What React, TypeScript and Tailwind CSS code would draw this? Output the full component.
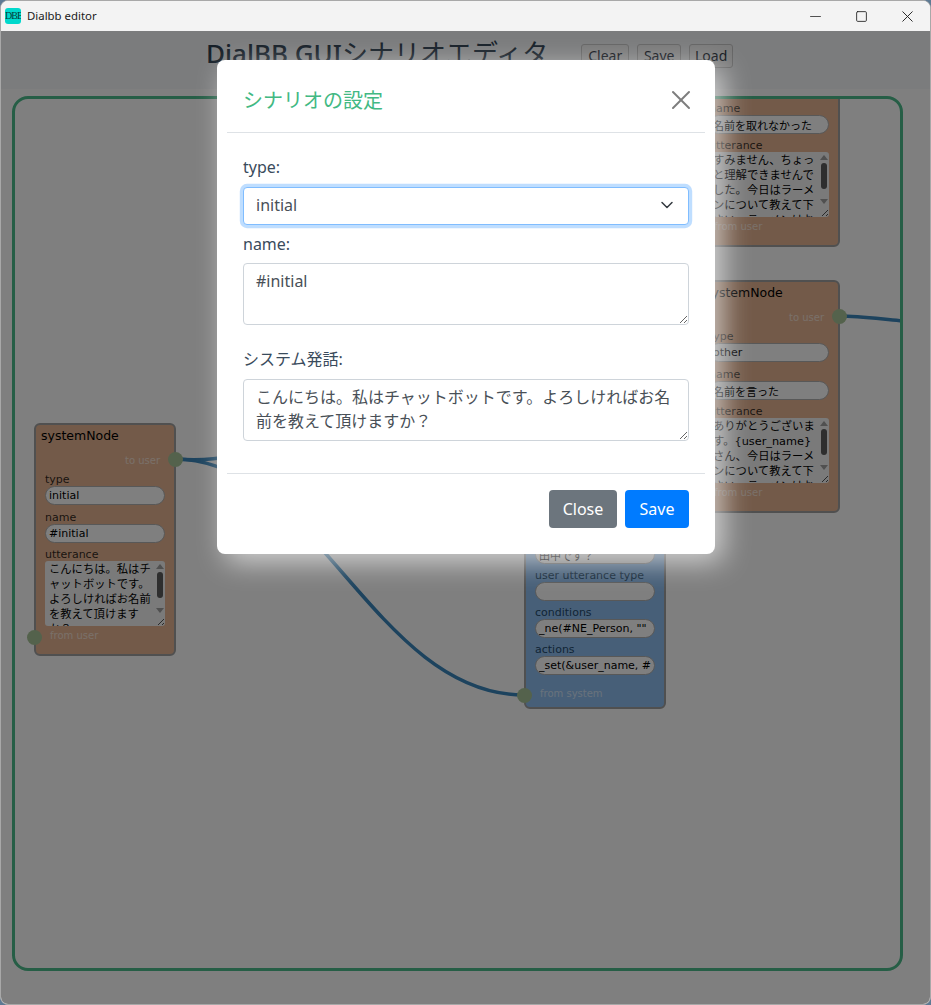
import React from 'react';
import { ChevronDown, Minus, Square, X } from 'lucide-react';

type Field = {
  label: string;
  value: string;
  multiline?: boolean;
};

type NodeProps = {
  left: number;
  top: number;
  fields: Field[];
};

const nodeFont = '[font-family:"DejaVu_Sans","Noto_Sans_CJK_JP",sans-serif]';
const pillInput =
  'block w-full h-[19px] rounded-full border border-[#b0b0b0] bg-white px-[3px] py-0 text-[11px] leading-[16px] text-black outline-none';

function Handle({ className }: { className: string }) {
  return <div className={`absolute w-[15px] h-[15px] rounded-full bg-[#a8c498] ${className}`} />;
}

function FakeScrollbar() {
  return (
    <div className="flex-none w-[11px] h-full flex flex-col items-center pt-[3px]">
      <div className="w-0 h-0 border-l-[4px] border-r-[4px] border-b-[5px] border-l-transparent border-r-transparent border-b-[#a0a0a0]" />
      <div className="w-[6px] h-[26px] mt-[3px] rounded-[3px] bg-[#5c5c5c]" />
      <div className="w-0 h-0 mt-[10px] border-l-[4px] border-r-[4px] border-t-[5px] border-l-transparent border-r-transparent border-t-[#a0a0a0]" />
    </div>
  );
}

function SystemNode({ left, top, fields }: NodeProps) {
  return (
    <div
      className={`absolute w-[142px] h-[233px] rounded-[6px] border-2 border-[#a0a0a0] bg-[#e6b593] px-[9px] ${nodeFont}`}
      style={{ left, top }}
    >
      <div className="-ml-[4px] pt-[2px] text-[12.5px] leading-[18px] text-black">systemNode</div>
      <div className="mt-[9px] pr-[5px] text-right text-[10px] leading-[14px] text-white/60">to user</div>
      <div className="mt-[6px] flex flex-col gap-[7px]">
        {fields.map((field) => (
          <div key={field.label} className={field.multiline ? '-mt-[1px]' : ''}>
            <div className="text-[11px] leading-[12px] text-black/80">{field.label}</div>
            {field.multiline ? (
              <div className="relative flex h-[65px] rounded-[3px] bg-[#f4f4f4] overflow-hidden">
                <div className="flex-1 min-w-0 pl-[4px] pt-[1px] text-[11.3px] leading-[15px] text-black break-all">{field.value}</div>
                <FakeScrollbar />
                <svg className="absolute right-0 bottom-0 w-[8px] h-[8px]" viewBox="0 0 8 8" stroke="#555" strokeWidth="1">
                  <path d="M1 7 L7 1 M5 7 L7 5" />
                </svg>
              </div>
            ) : (
              <input readOnly value={field.value} className={pillInput} />
            )}
          </div>
        ))}
      </div>
      <div className="absolute left-[14px] bottom-[11px] text-[10px] leading-[14px] text-white/60">from user</div>
      <Handle className="-left-[9px] bottom-[9px]" />
      <Handle className="-right-[9px] top-[27px]" />
    </div>
  );
}

function UserNodeBottom() {
  const rows = [
    { label: 'user utterance type', value: '' },
    { label: 'conditions', value: '_ne(#NE_Person, ""' },
    { label: 'actions', value: '_set(&user_name, #' },
  ];
  return (
    <div className={`absolute left-[509px] top-[398px] w-[142px] h-[212px] rounded-[6px] border-2 border-[#a0a0a0] bg-[#8fbff0] px-[9px] ${nodeFont}`}>
      <div className="pt-[46px] flex flex-col gap-[6px]">
        <input readOnly value="田中です？" className={pillInput} />
        {rows.map((row) => (
          <div key={row.label}>
            <div className="text-[11px] leading-[12px] text-[#234a6c]">{row.label}</div>
            <input readOnly value={row.value} className={pillInput} />
          </div>
        ))}
      </div>
      <div className="absolute left-[14px] bottom-[6px] text-[10px] leading-[14px] text-white/60">from system</div>
      <Handle className="-left-[9px] bottom-[4px]" />
    </div>
  );
}

function ScenarioModal() {
  const labelClass = 'block text-[16px] leading-[24px] text-[#3a4b5c]';
  const textareaClass =
    'block w-full h-[62px] rounded-[4px] border border-[#ced4da] bg-white px-[12px] py-[5px] text-[16px] leading-[24px] text-[#495057] outline-none';

  return (
    <div className="absolute left-[216px] top-[60px] w-[498px] h-[494px] rounded-[8px] bg-white px-[10px] shadow-[8px_8px_28px_rgba(255,255,255,0.65)] [font-family:'Noto_Sans','Noto_Sans_CJK_JP',sans-serif]">
      <div className="h-[73px] border-b border-[#dee2e6] pl-[16px] pr-[8px] flex items-center justify-between">
        <h5 className="text-[20px] leading-[30px] pt-[10px] font-normal text-[#42b983]">シナリオの設定</h5>
        <X className="w-[32px] h-[32px] mt-[7px] text-[#7d7d7d]" strokeWidth={1.5} />
      </div>

      <div className="px-[16px] pt-[22px] h-[341px] border-b border-[#dee2e6]">
        <label className={`${labelClass} mb-[8px]`}>type:</label>
        <div className="relative">
          <select
            defaultValue="initial"
            className="block w-full h-[38px] appearance-none rounded-[4px] border border-[#80bdff] bg-white pl-[12px] pr-[12px] pb-[2px] text-[16px] text-[#495057] outline-none shadow-[0_0_0_3.2px_rgba(0,123,255,0.25)]"
          >
            <option value="initial">initial</option>
            <option value="other">other</option>
          </select>
          <ChevronDown className="absolute right-[12px] top-[8px] w-[20px] h-[20px] text-[#343a40]" strokeWidth={1.8} />
        </div>
        <label className={`${labelClass} mt-[7px] mb-[7px]`}>name:</label>
        <textarea readOnly defaultValue="#initial" className={textareaClass} />
        <label className={`${labelClass} mt-[22px] mb-[8px]`}>システム発話:</label>
        <textarea
          readOnly
          defaultValue="こんにちは。私はチャットボットです。よろしければお名前を教えて頂けますか？"
          className={textareaClass}
        />
      </div>

      <div className="px-[16px] pt-[16px] flex justify-end gap-[8px]">
        <button className="h-[38px] w-[68px] rounded-[4px] bg-[#6c757d] text-[16px] text-white">Close</button>
        <button className="h-[38px] w-[64px] rounded-[4px] bg-[#007bff] text-[16px] text-white">Save</button>
      </div>
    </div>
  );
}

export default function App() {
  const headerButton = 'h-[24px] rounded-[3px] border border-[#c8c8c8] bg-[#f4f4f4] text-[14px] leading-[22px] text-[#1e2b38]';

  return (
    <div className="relative w-[931px] h-[1005px] overflow-hidden bg-[#5d7a94] [font-family:'Noto_Sans','Noto_Sans_CJK_JP',sans-serif]">
      <div className="w-full h-full rounded-[8px] overflow-hidden border border-[#a8a8a8] bg-white flex flex-col">
        {/* window chrome */}
        <div className="relative z-20 flex-none h-[30px] bg-[#f3f3f3] flex items-center justify-between">
          <div className="flex items-center pl-[4px] gap-[6px]">
            <div className="w-[16px] h-[16px] rounded-[3px] bg-[#00d8cc] overflow-hidden text-[10px] leading-[16px] text-center text-[#063b3b] [font-family:'Liberation_Serif',serif] tracking-[-0.9px]">
              DBB
            </div>
            <span className="text-[11.4px] leading-[16px] text-[#1a1a1a]">Dialbb editor</span>
          </div>
          <div className="flex items-center">
            <div className="w-[46px] flex justify-center"><Minus className="w-[17px] h-[17px] text-[#222]" strokeWidth={1.1} /></div>
            <div className="w-[46px] flex justify-center"><Square className="w-[13px] h-[13px] text-[#222]" strokeWidth={1.6} /></div>
            <div className="w-[46px] flex justify-center"><X className="w-[19px] h-[19px] text-[#222]" strokeWidth={1.2} /></div>
          </div>
        </div>

        {/* page */}
        <div className="relative flex-1 min-h-0">
          <div className="h-[58px] bg-[#f7f8fa] flex items-start pl-[205px] pt-[5px]">
            <h1 className="text-[26px] leading-[34px] text-[#2c3e50] font-medium whitespace-nowrap">
              DialBB GUI<span className="font-normal">シナリオエディタ</span>
            </h1>
            <div className="ml-[33px] mt-[8px] flex gap-[8px]">
              <button className={`${headerButton} w-[48px]`}>Clear</button>
              <button className={`${headerButton} w-[44px]`}>Save</button>
              <button className={`${headerButton} w-[44px]`}>Load</button>
            </div>
          </div>

          <div className="bg-white h-[915px] pl-[11px] pt-[7px]">
            <div className="relative w-[891px] h-[875px] rounded-[16px] border-[3px] border-[#4dbd8c] overflow-hidden">
              <svg className="absolute left-0 top-0 w-full h-full" fill="none" stroke="#3a86bc" strokeWidth="3.5">
                <path d="M160 360 C 300 360, 360 596, 509 596" />
                <path d="M160 360 C 190 362, 205 360, 240 352" />
                <path d="M824 217 C 845 217, 865 220, 888 222" />
              </svg>
              <SystemNode
                left={683}
                top={-85}
                fields={[
                  { label: 'type', value: 'other' },
                  { label: 'name', value: '名前を取れなかった' },
                  { label: 'utterance', value: 'すみません、ちょっと理解できませんでした。今日はラーメンについて教えて下さい。ラーメンはお好きですか', multiline: true },
                ]}
              />
              <SystemNode
                left={683}
                top={181}
                fields={[
                  { label: 'type', value: 'other' },
                  { label: 'name', value: '名前を言った' },
                  { label: 'utterance', value: 'ありがとうございます。{user_name}さん、今日はラーメンについて教えて下さい。ラーメンはお好きですか', multiline: true },
                ]}
              />
              <SystemNode
                left={19}
                top={324}
                fields={[
                  { label: 'type', value: 'initial' },
                  { label: 'name', value: '#initial' },
                  { label: 'utterance', value: 'こんにちは。私はチャットボットです。よろしければお名前を教えて頂けますか？', multiline: true },
                ]}
              />
              <UserNodeBottom />
            </div>
          </div>

          {/* backdrop */}
          <div className="absolute inset-0 bg-black/50" />
          <div className="absolute -top-[31px] left-0 right-0 h-0">
            <ScenarioModal />
          </div>
        </div>
      </div>
    </div>
  );
}
